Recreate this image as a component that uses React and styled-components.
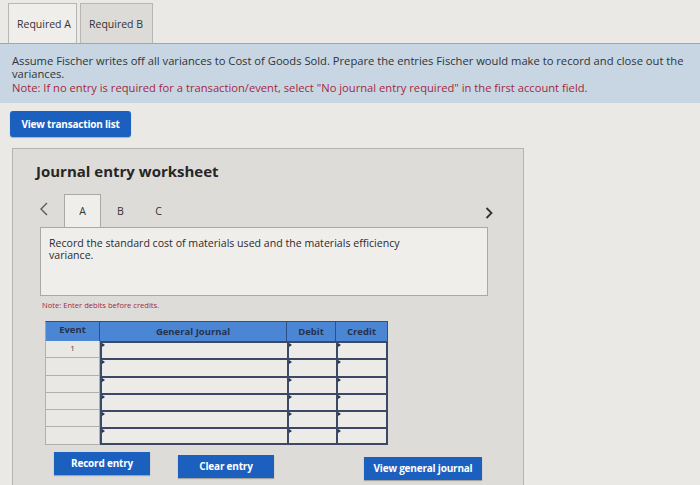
import React from 'react'
import styled, { createGlobalStyle } from 'styled-components'

const Global = createGlobalStyle`
  body {
    margin: 0;
    background: #ebe9e5;
    font-family: "Open Sans", "DejaVu Sans", sans-serif;
    color: #2b2b2b;
  }
`

const Page = styled.div`
  width: 700px;
  height: 485px;
  overflow: hidden;
`

const TabBar = styled.div`
  display: flex;
  align-items: flex-end;
  gap: 3px;
  height: 43px;
  padding-left: 8px;
`

const Tab = styled.div`
  height: 40px;
  box-sizing: border-box;
  padding: 0 0 0 8px;
  display: flex;
  align-items: center;
  white-space: nowrap;
  font-size: 10.5px;
  color: #333;
  border: 1px solid #b6b6b4;
  border-bottom: none;
  background: ${p => (p.active ? '#efeeea' : '#dcdbd8')};
  width: ${p => p.w}px;
`

const Info = styled.div`
  background: #c8d6e3;
  border-top: 1px solid #9da7b0;
  padding: 10px 2px 8px 12px;
  font-size: 11.2px;
  line-height: 13px;
  height: 60px;
  box-sizing: border-box;
  color: #2f3338;
`

const Note = styled.div`
  color: #a3283d;
  margin-top: 1px;
`

const TopActions = styled.div`
  padding: 8px 10px 0;
`

const Button = styled.button`
  background: #1b5fbf;
  color: #fff;
  border: none;
  border-radius: ${p => (p.round ? '3px' : '0')};
  font-family: "Open Sans", "DejaVu Sans", sans-serif;
  font-weight: 700;
  font-size: 10px;
  letter-spacing: -0.2px;
  height: ${p => p.h || 24}px;
  width: ${p => p.w}px;
  padding: 0;
  margin-top: ${p => p.dy || 0}px;
  margin-left: ${p => p.gap || 0}px;
  box-shadow: 0 1px 1px rgba(0, 0, 0, 0.25);
`

const Worksheet = styled.div`
  margin: 11px 0 0 12px;
  width: 512px;
  height: 340px;
  box-sizing: border-box;
  background: #dddcd9;
  border: 1px solid #b3b3b1;
  padding: 12px 0 0 27px;
`

const Title = styled.h2`
  margin: 0 0 0 -4px;
  font-size: 15px;
  font-weight: 700;
  color: #262626;
  height: 24px;
`

const NavRow = styled.div`
  display: flex;
  align-items: flex-end;
  height: 42px;
  width: 450px;
`

const Chevron = styled.svg`
  width: 24px;
  height: 14px;
  margin-bottom: 11px;
  flex: none;
`

const StepTab = styled.div`
  width: 37px;
  height: 33px;
  box-sizing: border-box;
  display: flex;
  align-items: center;
  justify-content: center;
  font-size: 10.5px;
  color: #333;
  margin-right: 1px;
  border: 1px solid ${p => (p.active ? '#a9a9a7' : 'transparent')};
  border-bottom: none;
  background: ${p => (p.active ? '#efeeeb' : 'transparent')};
`

const NextChevron = styled.svg`
  margin-left: auto;
  width: 8px;
  height: 12px;
  margin-bottom: 8px;
  margin-right: -3px;
`

const Prompt = styled.div`
  width: 448px;
  height: 69px;
  box-sizing: border-box;
  background: #efeeeb;
  border: 1px solid #a9a9a7;
  padding: 9px 70px 9px 8px;
  font-size: 10.6px;
  line-height: 12px;
  color: #2b2b2b;
`

const SmallNote = styled.div`
  color: #a3283d;
  font-size: 7.6px;
  margin: 4px 0 0 2px;
  height: 21px;
`

const Table = styled.div`
  display: grid;
  grid-template-columns: 55px 187px 49px 52px;
  width: 343px;
  margin-left: 5px;
`

const Head = styled.div`
  background: #4a86d4;
  color: #26324d;
  font-size: 9.5px;
  font-weight: 700;
  height: 20px;
  display: flex;
  justify-content: center;
  align-items: ${p => (p.top ? 'flex-start' : 'flex-end')};
  padding: 1px 0 3px;
  box-sizing: border-box;
  border-right: 1px solid #2c4f86;
  border-top: 1px solid #2c4f86;
  &:first-child {
    border-left: 1px solid #9aa5b5;
  }
`

const EventCell = styled.div`
  height: 17.3px;
  box-sizing: border-box;
  background: #e9e8e5;
  border: 1px solid #b0b0ae;
  border-top: none;
  font-size: 8px;
  text-align: center;
  color: #444;
  line-height: 13px;
`

const InputCell = styled.div`
  height: 17.3px;
  box-sizing: border-box;
  background: #ecebe8;
  border-top: 2px solid #3b4866;
  border-left: 2px solid #3b4866;
  border-right: ${p => (p.last ? '2px solid #3b4866' : 'none')};
  border-bottom: ${p => (p.bottom ? '2px solid #3b4866' : 'none')};
  position: relative;
  &::before {
    content: '';
    position: absolute;
    left: 0;
    top: 0;
    border-left: 3px solid #2a3550;
    border-top: 2px solid transparent;
    border-bottom: 2px solid transparent;
  }
`

const BottomActions = styled.div`
  display: flex;
  align-items: flex-start;
  margin: 7px 0 0 14px;
`

const rows = [1, 2, 3, 4, 5, 6]

export default function App() {
  return (
    <Page>
      <Global />
      <TabBar>
        <Tab active w={69}>Required A</Tab>
        <Tab w={73}>Required B</Tab>
      </TabBar>
      <Info>
        Assume Fischer writes off all variances to Cost of Goods Sold. Prepare the entries Fischer would make to record and close out the variances.
        <Note>Note: If no entry is required for a transaction/event, select "No journal entry required" in the first account field.</Note>
      </Info>
      <TopActions>
        <Button round w={121} h={26}>View transaction list</Button>
      </TopActions>
      <Worksheet>
        <Title>Journal entry worksheet</Title>
        <NavRow>
          <Chevron viewBox="0 0 24 14">
            <path d="M7 1 L1 7 L7 13" fill="none" stroke="#5a5a5a" strokeWidth="1.4" />
          </Chevron>
          <StepTab active>A</StepTab>
          <StepTab>B</StepTab>
          <StepTab>C</StepTab>
          <NextChevron viewBox="0 0 8 12">
            <path d="M1.5 1 L6.5 6 L1.5 11" fill="none" stroke="#333" strokeWidth="1.8" />
          </NextChevron>
        </NavRow>
        <Prompt>Record the standard cost of materials used and the materials efficiency variance.</Prompt>
        <SmallNote>Note: Enter debits before credits.</SmallNote>
        <Table>
          <Head top>Event</Head>
          <Head>General Journal</Head>
          <Head>Debit</Head>
          <Head>Credit</Head>
          {rows.map(r => (
            <React.Fragment key={r}>
              <EventCell>{r === 1 ? '1' : ''}</EventCell>
              <InputCell bottom={r === 6} />
              <InputCell bottom={r === 6} />
              <InputCell bottom={r === 6} last />
            </React.Fragment>
          ))}
        </Table>
        <BottomActions>
          <Button w={96} h={23}>Record entry</Button>
          <Button w={96} h={23} dy={3} gap={28}>Clear entry</Button>
          <Button w={118} h={23} dy={5} gap={90}>View general journal</Button>
        </BottomActions>
      </Worksheet>
    </Page>
  )
}
